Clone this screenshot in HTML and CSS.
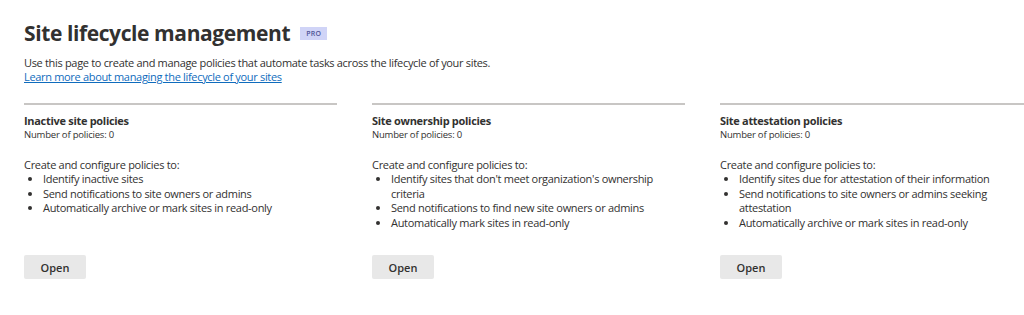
FILE: index.html
```html
<!DOCTYPE html>
<html lang="en">
<head>
<meta charset="UTF-8">
<meta name="viewport" content="width=device-width, initial-scale=1.0">
<title>Site lifecycle management</title>
<link rel="stylesheet" href="styles.css">
</head>
<body>

<div class="page">
  <div class="page-header">
    <h1>Site lifecycle management</h1>
    <span class="badge">PRO</span>
  </div>
  <p class="intro">Use this page to create and manage policies that automate tasks across the lifecycle of your sites.</p>
  <p class="intro"><a class="learn-link" href="#">Learn more about managing the lifecycle of your sites</a></p>

  <div class="policy-cards">
    <div class="card">
      <h2>Inactive site policies</h2>
      <div class="count">Number of policies: 0</div>
      <p class="lead">Create and configure policies to:</p>
      <ul>
        <li>Identify inactive sites</li>
        <li>Send notifications to site owners or admins</li>
        <li>Automatically archive or mark sites in read-only</li>
      </ul>
      <button>Open</button>
    </div>

    <div class="card">
      <h2>Site ownership policies</h2>
      <div class="count">Number of policies: 0</div>
      <p class="lead">Create and configure policies to:</p>
      <ul>
        <li>Identify sites that don't meet organization's ownership criteria</li>
        <li>Send notifications to find new site owners or admins</li>
        <li>Automatically mark sites in read-only</li>
      </ul>
      <button>Open</button>
    </div>

    <div class="card">
      <h2>Site attestation policies</h2>
      <div class="count">Number of policies: 0</div>
      <p class="lead">Create and configure policies to:</p>
      <ul>
        <li>Identify sites due for attestation of their information</li>
        <li>Send notifications to site owners or admins seeking attestation</li>
        <li>Automatically archive or mark sites in read-only</li>
      </ul>
      <button>Open</button>
    </div>
  </div>
</div>

</body>
</html>
```

FILE: styles.css
```css
/* Reset */
* {
  box-sizing: border-box;
  margin: 0;
  padding: 0;
}

body {
  font-family: 'Open Sans', sans-serif;
  color: #323130;
  background: #ffffff;
  overflow: hidden;
}

.page {
  padding: 18px 0 0 24px;
  width: 1040px;
}

/* Header */
.page-header {
  display: flex;
  align-items: center;
  gap: 10px;
  height: 30px;
}

.page-header h1 {
  font-size: 21px;
  font-weight: 700;
  letter-spacing: -0.4px;
}

.badge {
  background: #d0d4f7;
  color: #4f5597;
  font-size: 7px;
  font-weight: 600;
  padding: 2px 6px;
  letter-spacing: 0.3px;
}

.intro {
  font-size: 11px;
  line-height: 14px;
  letter-spacing: -0.32px;
}

.page-header + .intro {
  margin-top: 8px;
}

.learn-link {
  color: #0f6cbd;
}

/* Cards */
.policy-cards {
  display: grid;
  grid-template-columns: repeat(3, 313px);
  gap: 35px;
  margin-top: 19px;
}

.card {
  display: flex;
  flex-direction: column;
  align-items: flex-start;
  border-top: 2px solid #c8c6c4;
  padding-top: 9px;
  font-size: 11px;
  letter-spacing: -0.3px;
}

.card h2 {
  font-size: 11px;
  font-weight: 700;
  line-height: 14px;
}

.count {
  font-size: 9.5px;
  line-height: 14px;
  letter-spacing: -0.2px;
}

.lead {
  margin-top: 16px;
  line-height: 14px;
}

.card ul {
  padding-left: 19px;
  margin-bottom: 25px;
  line-height: 14.5px;
}

.card button {
  display: block;
  margin-top: auto;
  width: 62px;
  height: 24px;
  border: none;
  border-radius: 2px;
  background: #e8e8e8;
  color: #323130;
  font-family: 'Open Sans', sans-serif;
  font-size: 11px;
  font-weight: 600;
}
```
